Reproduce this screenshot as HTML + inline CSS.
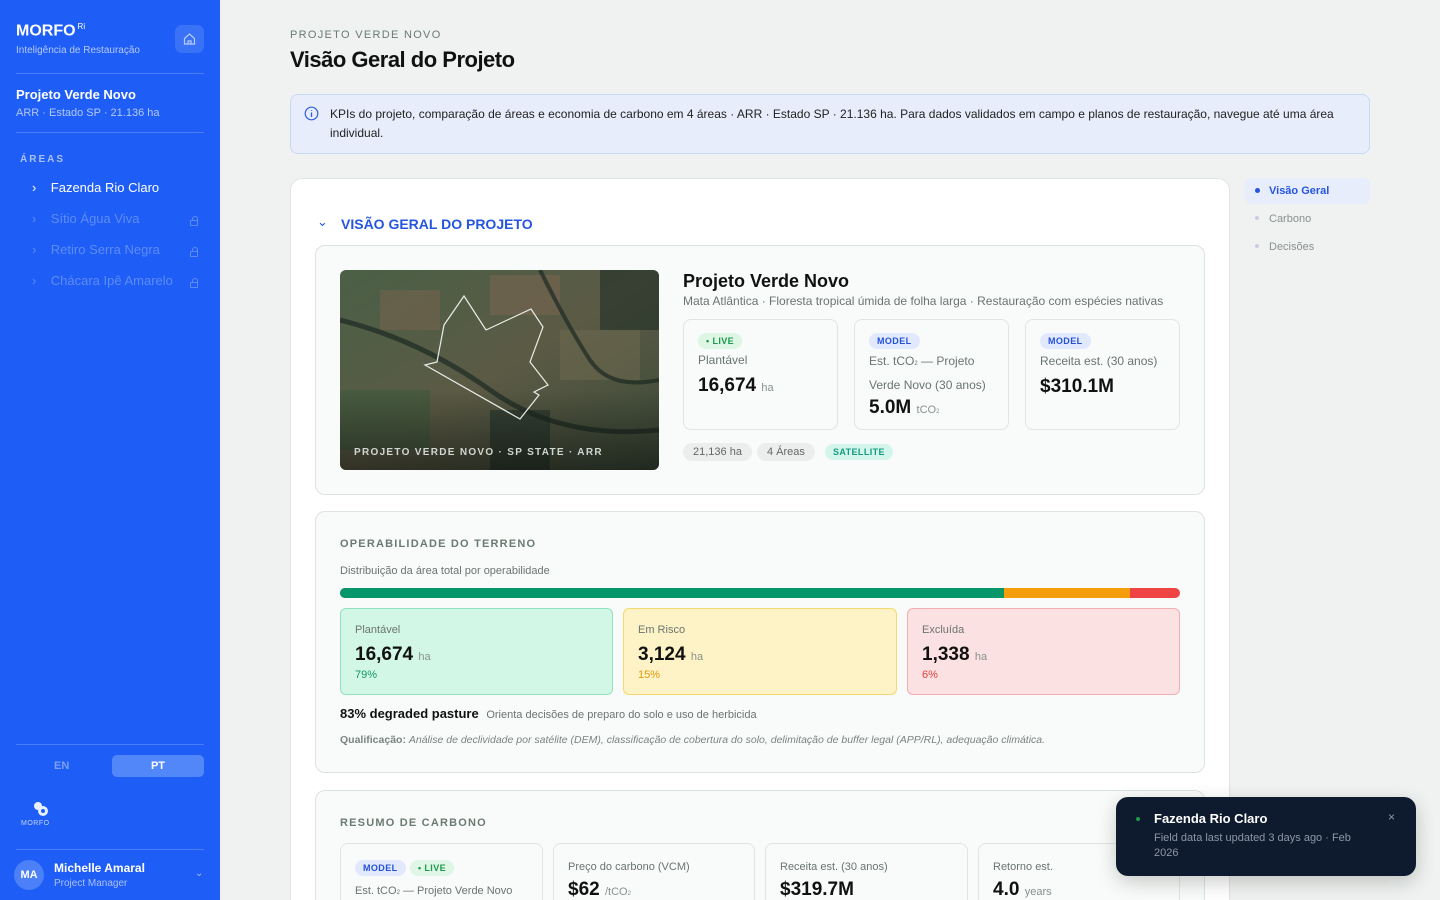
<!DOCTYPE html>
<html><head><meta charset="utf-8"><style>
*{box-sizing:border-box;margin:0;padding:0}
html,body{width:1440px;height:900px;overflow:hidden}
body{font-family:"Liberation Sans",sans-serif;background:#eff2f0;color:#111}
#w{position:relative;width:1440px;height:900px;overflow:hidden}
.sb{position:absolute;left:0;top:0;width:220px;height:900px;background:#1f5ef6;color:#fff}
.abs{position:absolute}
.lbl{font-size:11px;letter-spacing:1.2px;color:#6b7a72;font-weight:bold}
.card{position:absolute;background:#f9fbfa;border:1px solid #dde3df;border-radius:10px}
.kpi{position:absolute;top:319px;width:155px;height:111px;border:1px solid #dfe5e1;border-radius:8px;background:#f8fbf9}
.tag{display:inline-block;font-size:9px;font-weight:bold;padding:3px 8px;border-radius:9px;letter-spacing:.4px}
.model{background:#e3e9fd;color:#2451d8}
.live{background:#dff6e6;color:#1d9a4b}
.small{font-size:12px;color:#6b7470}
.big{font-size:19px;font-weight:bold;color:#111}
.unit{font-size:11px;color:#8a918d;font-weight:normal}
.ob{position:absolute;top:608px;height:87px;border-radius:6px;padding:15px 14px}
.cb{position:absolute;top:843px;height:80px;border:1px solid #dfe5e1;border-radius:8px;background:#f8fbf9;padding:14px}
.lock{position:absolute;left:190px;width:8px;height:6px;border:1px solid #5d8cf8;border-radius:1px}
.lock:before{content:"";position:absolute;left:1px;top:-5px;width:4px;height:4px;border:1px solid #5d8cf8;border-bottom:none;border-radius:3px 3px 0 0}
</style></head><body><div id="w">
<div class="sb">
 <div class="abs" style="left:16px;top:22px;font-size:16px;font-weight:bold">MORFO<sup style="font-size:8px;font-weight:normal;margin-left:2px">Ri</sup></div>
 <div class="abs" style="left:16px;top:45px;font-size:10px;color:#b4c8fb">Inteligência de Restauração</div>
 <div class="abs" style="left:175px;top:25px;width:29px;height:28px;border-radius:7px;background:#3a72f7">
  <svg width="29" height="28" viewBox="0 0 29 28"><path d="M9.5 13.5 L14.5 9 L19.5 13.5 V19 H9.5 Z M13 19 V16 H16 V19" fill="none" stroke="#b9cdfc" stroke-width="1.2"/></svg></div>
 <div class="abs" style="left:16px;top:73px;width:188px;height:1px;background:#4a7df8"></div>
 <div class="abs" style="left:16px;top:87px;font-size:13px;font-weight:bold">Projeto Verde Novo</div>
 <div class="abs" style="left:16px;top:107px;font-size:11px;color:#b4c8fb">ARR · Estado SP · 21.136 ha</div>
 <div class="abs" style="left:16px;top:132px;width:188px;height:1px;background:#4a7df8"></div>
 <div class="abs" style="left:20px;top:154px;font-size:10px;font-weight:bold;letter-spacing:2px;color:#a9c0fb">ÁREAS</div>
 <div class="abs" style="left:32px;top:180px;font-size:13px;color:#fff">›&nbsp;&nbsp;&nbsp;&nbsp;Fazenda Rio Claro</div>
 <div class="abs" style="left:32px;top:211px;font-size:13px;color:#5d8cf8">›&nbsp;&nbsp;&nbsp;&nbsp;Sítio Água Viva</div>
 <div class="abs" style="left:32px;top:242px;font-size:13px;color:#5d8cf8">›&nbsp;&nbsp;&nbsp;&nbsp;Retiro Serra Negra</div>
 <div class="abs" style="left:32px;top:273px;font-size:13px;color:#5d8cf8">›&nbsp;&nbsp;&nbsp;&nbsp;Chácara Ipê Amarelo</div>
 <div class="lock" style="top:220px"></div>
 <div class="lock" style="top:251px"></div>
 <div class="lock" style="top:282px"></div>
 <div class="abs" style="left:16px;top:744px;width:188px;height:1px;background:#4a7df8"></div>
 <div class="abs" style="left:54px;top:760px;font-size:11px;font-weight:bold;color:#7aa0f9">EN</div>
 <div class="abs" style="left:112px;top:755px;width:92px;height:22px;border-radius:5px;background:#5287fa;font-size:11px;font-weight:bold;text-align:center;line-height:22px">PT</div>
 <div class="abs" style="left:32px;top:800px;"><svg width="18" height="18"><circle cx="6" cy="6" r="4" fill="#e8efff"/><circle cx="11" cy="11" r="5" fill="#e8efff"/><circle cx="11" cy="11" r="2" fill="#1f5ef6"/></svg></div>
 <div class="abs" style="left:21px;top:820px;font-size:7px;color:#c4d5fc;letter-spacing:.5px">MORFO</div>
 <div class="abs" style="left:16px;top:849px;width:188px;height:1px;background:#4a7df8"></div>
 <div class="abs" style="left:14px;top:860px;width:30px;height:30px;border-radius:50%;background:#4b80f8;font-size:11px;font-weight:bold;text-align:center;line-height:30px">MA</div>
 <div class="abs" style="left:54px;top:861px;font-size:12px;font-weight:bold">Michelle Amaral</div>
 <div class="abs" style="left:54px;top:878px;font-size:10px;color:#a9c0fb">Project Manager</div>
 <div class="abs" style="left:195px;top:868px;font-size:10px;color:#a9c0fb">⌄</div>
</div>

<div class="abs lbl" style="left:290px;top:29px;font-weight:normal;letter-spacing:1.3px">PROJETO VERDE NOVO</div>
<div class="abs" style="left:290px;top:47px;font-size:22px;font-weight:bold;letter-spacing:-.5px">Visão Geral do Projeto</div>
<div class="abs" style="left:290px;top:94px;width:1080px;height:60px;background:#e7edfb;border:1px solid #c9d7f6;border-radius:8px"></div>
<svg class="abs" style="left:304px;top:106px" width="15" height="15"><circle cx="7.5" cy="7.5" r="6.3" fill="none" stroke="#2f5fe0" stroke-width="1.2"/><path d="M7.5 6.5V11M7.5 4.2v.8" stroke="#2f5fe0" stroke-width="1.3"/></svg>
<div class="abs" style="left:330px;top:105px;width:1030px;font-size:12px;line-height:19px;color:#222">KPIs do projeto, comparação de áreas e economia de carbono em 4 áreas · ARR · Estado SP · 21.136 ha. Para dados validados em campo e planos de restauração, navegue até uma área individual.</div>

<div class="abs" style="left:290px;top:178px;width:940px;height:740px;background:#fff;border:1px solid #dfe4e1;border-radius:12px"></div>
<div class="abs" style="left:317px;top:214px;font-size:13px;color:#2456e0">⌄</div>
<div class="abs" style="left:341px;top:216px;font-size:14px;font-weight:bold;color:#2456e0">VISÃO GERAL DO PROJETO</div>

<div class="card" style="left:315px;top:245px;width:890px;height:250px"></div>
<svg class="abs" style="left:340px;top:270px;border-radius:6px" width="319" height="200">
 <defs><linearGradient id="g" x1="0" y1="0" x2="1" y2="1"><stop offset="0" stop-color="#4a6046"/><stop offset=".5" stop-color="#5b5a45"/><stop offset="1" stop-color="#3b4a38"/></linearGradient>
 <linearGradient id="f" x1="0" y1="0" x2="0" y2="1"><stop offset=".6" stop-color="#000" stop-opacity="0"/><stop offset="1" stop-color="#000" stop-opacity=".45"/></linearGradient></defs>
 <rect width="319" height="200" fill="url(#g)"/>
 <rect x="40" y="20" width="60" height="40" fill="#7a6450" opacity=".5"/><rect x="150" y="5" width="70" height="40" fill="#7e6652" opacity=".5"/>
 <rect x="220" y="60" width="80" height="50" fill="#6f6a50" opacity=".5"/><rect x="0" y="120" width="90" height="60" fill="#3e5a3e" opacity=".6"/>
 <rect x="260" y="0" width="59" height="60" fill="#1f2f26" opacity=".6"/><rect x="150" y="140" width="60" height="60" fill="#22322a" opacity=".6"/>
 <path d="M0 50 Q80 70 150 120 T319 160" stroke="#1d2a22" stroke-width="5" fill="none" opacity=".7"/>
 <path d="M200 0 Q230 60 250 90 T319 110" stroke="#1d2a22" stroke-width="4" fill="none" opacity=".7"/>
 <rect width="319" height="200" fill="url(#f)"/>
 <polygon points="124,26 146,60 191,39 203,57 190,92 208,115 194,122 199,125 180,149 85,95 97,92 104,55" fill="none" stroke="#e8efe8" stroke-width="1.2"/>
 <text x="14" y="185" font-family="Liberation Sans" font-size="10" font-weight="bold" letter-spacing="1.3" fill="#d0d6d0">PROJETO VERDE NOVO · SP STATE · ARR</text>
</svg>
<div class="abs" style="left:683px;top:271px;font-size:18px;font-weight:bold">Projeto Verde Novo</div>
<div class="abs" style="left:683px;top:294px;font-size:12px;color:#6b7470">Mata Atlântica · Floresta tropical úmida de folha larga · Restauração com espécies nativas</div>
<div class="kpi" style="left:683px"><div class="abs" style="left:14px;top:11px"><span class="tag live">• LIVE</span></div><div class="abs small" style="left:14px;top:33px">Plantável</div><div class="abs big" style="left:14px;top:55px">16,674 <span class="unit">ha</span></div></div>
<div class="kpi" style="left:854px"><div class="abs" style="left:14px;top:11px"><span class="tag model">MODEL</span></div><div class="abs small" style="left:14px;top:31px;line-height:21px;width:130px">Est. tCO<span style="font-size:6px">2</span> — Projeto Verde Novo (30 anos)</div><div class="abs big" style="left:14px;top:77px">5.0M <span class="unit">tCO<span style="font-size:6px">2</span></span></div></div>
<div class="kpi" style="left:1025px"><div class="abs" style="left:14px;top:11px"><span class="tag model">MODEL</span></div><div class="abs small" style="left:14px;top:34px">Receita est. (30 anos)</div><div class="abs big" style="left:14px;top:56px">$310.1M</div></div>
<div class="abs" style="left:683px;top:443px;height:18px;padding:0 10px;border-radius:9px;background:#eceeed;font-size:11px;color:#666;line-height:18px">21,136 ha</div>
<div class="abs" style="left:757px;top:443px;height:18px;padding:0 10px;border-radius:9px;background:#eceeed;font-size:11px;color:#666;line-height:18px">4 Áreas</div>
<div class="abs" style="left:825px;top:444px;height:16px;padding:0 8px;border-radius:8px;background:#d3f5ec;font-size:9px;font-weight:bold;color:#139c80;line-height:16px;letter-spacing:.4px">SATELLITE</div>

<div class="card" style="left:315px;top:511px;width:890px;height:262px"></div>
<div class="abs lbl" style="left:340px;top:538px">OPERABILIDADE DO TERRENO</div>
<div class="abs small" style="left:340px;top:565px;font-size:11px">Distribuição da área total por operabilidade</div>
<div class="abs" style="left:340px;top:588px;width:840px;height:10px;border-radius:5px;overflow:hidden;background:#ef4444"><div style="float:left;width:664px;height:10px;background:#059669"></div><div style="float:left;width:126px;height:10px;background:#f59e0b"></div></div>
<div class="ob" style="left:340px;width:273px;background:#d3f7e6;border:1px solid #8fe2c0"><div class="small" style="font-size:11px">Plantável</div><div class="big" style="margin-top:8px">16,674 <span class="unit">ha</span></div><div style="font-size:11px;color:#119669;margin-top:3px">79%</div></div>
<div class="ob" style="left:623px;width:274px;background:#fdf3c6;border:1px solid #f5d870"><div class="small" style="font-size:11px">Em Risco</div><div class="big" style="margin-top:8px">3,124 <span class="unit">ha</span></div><div style="font-size:11px;color:#e5990a;margin-top:3px">15%</div></div>
<div class="ob" style="left:907px;width:273px;background:#fce1e2;border:1px solid #f3aeb2"><div class="small" style="font-size:11px">Excluída</div><div class="big" style="margin-top:8px">1,338 <span class="unit">ha</span></div><div style="font-size:11px;color:#e13d3d;margin-top:3px">6%</div></div>
<div class="abs" style="left:340px;top:706px;font-size:13px;font-weight:bold">83% degraded pasture <span style="font-size:11px;font-weight:normal;color:#6b7470;margin-left:4px">Orienta decisões de preparo do solo e uso de herbicida</span></div>
<div class="abs" style="left:340px;top:734px;font-size:10.5px;color:#7a847f"><b>Qualificação:</b> <i>Análise de declividade por satélite (DEM), classificação de cobertura do solo, delimitação de buffer legal (APP/RL), adequação climática.</i></div>

<div class="card" style="left:315px;top:790px;width:890px;height:140px"></div>
<div class="abs lbl" style="left:340px;top:817px">RESUMO DE CARBONO</div>
<div class="cb" style="left:340px;width:203px"><span class="tag model">MODEL</span> <span class="tag live">• LIVE</span><div class="small" style="font-size:11px;margin-top:9px">Est. tCO<span style="font-size:6px">2</span> — Projeto Verde Novo</div></div>
<div class="cb" style="left:553px;width:202px"><div class="small" style="font-size:11px;margin-top:3px">Preço do carbono (VCM)</div><div class="big" style="margin-top:6px">$62 <span class="unit">/tCO<span style="font-size:6px">2</span></span></div></div>
<div class="cb" style="left:765px;width:203px"><div class="small" style="font-size:11px;margin-top:3px">Receita est. (30 anos)</div><div class="big" style="margin-top:6px">$319.7M</div></div>
<div class="cb" style="left:978px;width:202px"><div class="small" style="font-size:11px;margin-top:3px">Retorno est.</div><div class="big" style="margin-top:6px">4.0 <span class="unit">years</span></div></div>

<div class="abs" style="left:1245px;top:178px;width:125px;height:26px;border-radius:6px;background:#e8edfb"></div>
<div class="abs" style="left:1255px;top:188px;width:5px;height:5px;border-radius:50%;background:#2456e0"></div>
<div class="abs" style="left:1269px;top:185px;font-size:11px;font-weight:bold;color:#2456e0">Visão Geral</div>
<div class="abs" style="left:1255px;top:216px;width:4px;height:4px;border-radius:50%;background:#ccd"></div>
<div class="abs" style="left:1269px;top:213px;font-size:11px;color:#8a918d">Carbono</div>
<div class="abs" style="left:1255px;top:244px;width:4px;height:4px;border-radius:50%;background:#ccd"></div>
<div class="abs" style="left:1269px;top:241px;font-size:11px;color:#8a918d">Decisões</div>

<div class="abs" style="left:1116px;top:797px;width:300px;height:79px;border-radius:12px;background:#0e1a2e;box-shadow:0 6px 20px rgba(0,0,0,.2)"></div>
<div class="abs" style="left:1136px;top:817px;width:4px;height:4px;border-radius:50%;background:#1d9a4b"></div>
<div class="abs" style="left:1154px;top:811px;font-size:13px;font-weight:bold;color:#fff">Fazenda Rio Claro</div>
<div class="abs" style="left:1154px;top:831px;width:215px;font-size:11px;line-height:15px;color:#8e97a6">Field data last updated 3 days ago · Feb 2026</div>
<div class="abs" style="left:1388px;top:810px;font-size:12px;color:#8e97a6">×</div>
</div></body></html>
